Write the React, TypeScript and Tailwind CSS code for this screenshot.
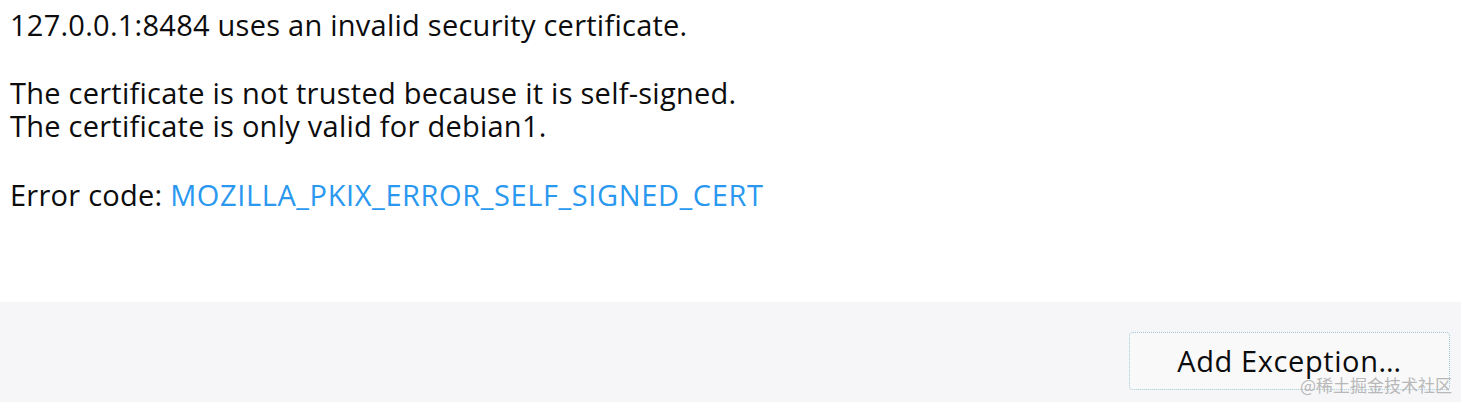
export default function App() {
  return (
    <div className="w-[1461px] h-[402px] bg-white flex flex-col overflow-hidden relative" style={{ fontFamily: '"Open Sans", "Noto Sans", sans-serif' }}>
      <div className="h-[302px] pl-[10px] pt-[8px] text-[#0c0c0d] text-[29px] leading-[33px] tracking-[0.25px]">
        <p>127.0.0.1:8484 uses an invalid security certificate.</p>
        <p className="mt-[35px]">The certificate is not trusted because it is self-signed.</p>
        <p>The certificate is only valid for debian1.</p>
        <p className="mt-[36px]">
          Error code: <span className="text-[#2a98ef] tracking-[0.6px]">MOZILLA_PKIX_ERROR_SELF_SIGNED_CERT</span>
        </p>
      </div>
      <div className="flex-1 bg-[#f6f6f8] flex justify-end items-start pt-[30px] pr-[11px]">
        <button className="w-[321px] h-[58px] rounded-[4px] border border-dotted border-[#9fc7d6] bg-[#f9f9fa] text-[#0c0c0d] text-[29px] tracking-[0.6px] flex items-center justify-center pb-[1px]">
          Add Exception…
        </button>
      </div>
      <div className="absolute right-[9px] bottom-[6px] text-[#b8b8b8] text-[17px] leading-[22px]" style={{ fontFamily: '"Noto Sans CJK SC", sans-serif' }}>
        @稀土掘金技术社区
      </div>
    </div>
  );
}
